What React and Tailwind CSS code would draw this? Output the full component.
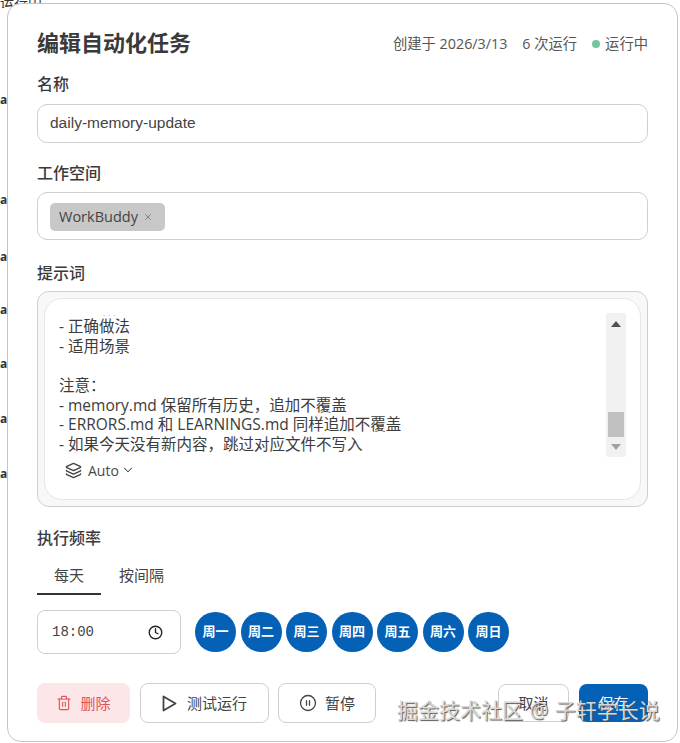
import { Layers, ChevronDown, Clock, Trash2, CirclePause, X } from 'lucide-react';

const SANS = 'font-["Open_Sans","Noto_Sans_CJK_SC",sans-serif]';
const DAYS = ['周一', '周二', '周三', '周四', '周五', '周六', '周日'];
const PROMPT_LINES = [
  '- 正确做法',
  '- 适用场景',
  '',
  '注意：',
  '- memory.md 保留所有历史，追加不覆盖',
  '- ERRORS.md 和 LEARNINGS.md 同样追加不覆盖',
  '- 如果今天没有新内容，跳过对应文件不写入',
];
const EDGE_TEXT = [
  ['a', 'h-[100px]'],
  ['at', 'h-[100px]'],
  ['at', 'h-[57px]'],
  ['at', 'h-[53px]'],
  ['at', 'h-[54px]'],
  ['at', 'h-[55px]'],
  ['at', 'h-[55px]'],
];

const FieldLabel = ({ children, className = '' }) => (
  <div className={`text-[16px] leading-[24px] font-medium text-[#3a3a3a] ${className}`}>{children}</div>
);

const Scrollbar = () => (
  <div className="flex w-[20px] shrink-0 flex-col items-center rounded-[2px] bg-[#f1f1f1] h-[144px] px-[2px]">
    <div className="mt-[8px] h-0 w-0 border-x-[5px] border-b-[6px] border-x-transparent border-b-[#505050]" />
    <div className="mt-[85px] h-[25px] w-[16px] bg-[#c1c1c1]" />
    <div className="mt-[7px] h-0 w-0 border-x-[5px] border-t-[6px] border-x-transparent border-t-[#a3a3a3]" />
  </div>
);

const PromptBox = () => (
  <div className="mt-[6px] h-[216px] rounded-[12px] border border-[#cfcfcf] bg-[#f8f8f8] p-[6px]">
    <div className="flex h-full flex-col rounded-[18px] border border-[#e6e6e6] bg-white pl-[14px] pr-[14px]">
      <div className="flex pt-[14px]">
        <div className="relative h-[144px] flex-1 overflow-hidden text-[15.5px] leading-[19.7px] text-[#3c3c3c]">
          <div className="absolute left-[44px] top-[-2px] text-[8px] leading-[4px] tracking-[3px] text-[#8a8a8a]">...</div>
          <div className="pt-[4px]">
            {PROMPT_LINES.map((line, i) => (
              <div key={i} className="h-[19.7px] whitespace-pre">{line}</div>
            ))}
          </div>
        </div>
        <Scrollbar />
      </div>
      <div className="mt-[1px] flex h-[24px] items-center pl-[6px] text-[14px] text-[#4a4a4a]">
        <Layers size={17} strokeWidth={2} className="text-[#444]" />
        <span className="ml-[6px]">Auto</span>
        <ChevronDown size={14} strokeWidth={1.8} className="ml-[2px]" />
      </div>
    </div>
  </div>
);

const PlayOutline = () => (
  <svg width="15" height="17" viewBox="0 0 15 17" fill="none" stroke="#444" strokeWidth="1.8" strokeLinejoin="round">
    <polygon points="1.5,1.5 13.5,8.5 1.5,15.5" />
  </svg>
);

const App = () => (
  <div className={`relative h-[743px] w-[680px] overflow-hidden bg-white ${SANS}`}>
    {/* page behind the dialog, only its left edge shows */}
    <div className="text-[12px] font-bold leading-[16px] text-[#333]">
      <div className="h-[8px] overflow-hidden text-[14px] font-normal leading-[6px] whitespace-nowrap">运行中</div>
      {EDGE_TEXT.map(([text, h], i) => (
        <div key={i} className={`${h} flex items-end`}>{text}</div>
      ))}
    </div>

    <div className="absolute left-[7px] top-[3px] flex h-[739px] w-[671px] flex-col rounded-[14px] border border-[#c4c4c4] bg-white px-[29px]">
      <div className="mt-[21px] flex h-[34px] items-center justify-between">
        <h2 className="text-[22px] font-bold text-[#3a3a3a]">编辑自动化任务</h2>
        <div className="mt-[3px] flex items-center text-[14.3px] text-[#555]">
          <span>创建于 2026/3/13</span>
          <span className="ml-[15px]">6 次运行</span>
          <span className="ml-[15px] h-[8px] w-[8px] rounded-full bg-[#74c69d]" />
          <span className="ml-[5px]">运行中</span>
        </div>
      </div>

      <FieldLabel className="mt-[13px]">名称</FieldLabel>
      <div className="mt-[8px] flex h-[39px] items-center rounded-[10px] border border-[#cfcfcf] px-[12px] pb-[2px] font-['Liberation_Sans',sans-serif] text-[15.5px] text-[#444]">
        daily-memory-update
      </div>

      <FieldLabel className="mt-[18px]">工作空间</FieldLabel>
      <div className="mt-[7px] flex h-[48px] items-center rounded-[10px] border border-[#cfcfcf] px-[12px] pt-[2px]">
        <div className="flex h-[28px] w-[115px] items-center rounded-[5px] bg-[#c8c8c8] pl-[9px] text-[14.5px] text-[#444]">
          WorkBuddy
          <X size={10} strokeWidth={2} className="ml-[5px] text-[#777]" />
        </div>
      </div>

      <FieldLabel className="mt-[21px]">提示词</FieldLabel>
      <PromptBox />

      <FieldLabel className="mt-[19px]">执行频率</FieldLabel>
      <div className="mt-[10px] flex h-[35px] items-start text-[15px] text-[#444]">
        <div className="h-[35px] w-[64px] border-b-2 border-[#333] pt-[4px] text-center">每天</div>
        <div className="ml-[18px] pt-[4px]">按间隔</div>
      </div>

      <div className="mt-[15px] flex items-center">
        <div className="flex h-[44px] w-[144px] items-center justify-between rounded-[8px] border border-[#cfcfcf] pl-[14px] pr-[17px] font-['Liberation_Mono'] text-[14px] text-[#444]">
          18:00
          <Clock size={15} strokeWidth={2.2} className="text-[#222]" />
        </div>
        <div className="ml-[14px] flex gap-[4.5px]">
          {DAYS.map((day) => (
            <div
              key={day}
              className="flex h-[40px] w-[41px] items-center justify-center rounded-full bg-[#0461b5] text-[13px] font-bold text-white"
            >
              {day}
            </div>
          ))}
        </div>
      </div>

      <div className="mt-[29px] flex items-center text-[15px]">
        <button className="flex h-[40px] w-[93px] items-center justify-center gap-[8px] rounded-[8px] bg-[#fde6e7] text-[#e0525a]">
          <Trash2 size={16} strokeWidth={1.7} />
          删除
        </button>
        <button className="ml-[10px] flex h-[40px] w-[129px] items-center justify-center gap-[10px] rounded-[8px] border border-[#cfcfcf] text-[#444]">
          <PlayOutline />
          测试运行
        </button>
        <button className="ml-[9px] flex h-[40px] w-[98px] items-center justify-center gap-[8px] rounded-[8px] border border-[#cfcfcf] text-[#444]">
          <CirclePause size={18} strokeWidth={1.7} />
          暂停
        </button>
        <button className="ml-auto h-[38px] w-[71px] rounded-[8px] border border-[#cfcfcf] text-[#444]">取消</button>
        <button className="ml-[10px] h-[38px] w-[69px] rounded-[8px] bg-[#0461b5] text-white">保存</button>
      </div>
    </div>

    {/* watermark over the dialog */}
    <div className="absolute left-[397px] top-[696px] whitespace-nowrap text-[21px] leading-[28px] text-[#d8d8d8] [word-spacing:1px] [text-shadow:1px_1px_1px_#555]">
      掘金技术社区 @ 子轩学长说
    </div>
  </div>
);

export default App;
